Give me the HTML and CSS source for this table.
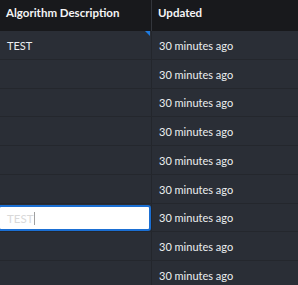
FILE: index.html
```html
<!DOCTYPE html>
<html>
<head>
<meta charset="utf-8">
<link rel="stylesheet" href="styles.css">
</head>
<body>
<div class="grid">
  <div class="header">
    <div class="hcell c1">Algorithm Description</div>
    <div class="hcell c2">Updated</div>
  </div>
  <div class="body">
    <div class="row"><div class="cell c1 marked">TEST</div><div class="cell c2">30 minutes ago</div></div>
    <div class="row"><div class="cell c1"></div><div class="cell c2">30 minutes ago</div></div>
    <div class="row"><div class="cell c1"></div><div class="cell c2">30 minutes ago</div></div>
    <div class="row"><div class="cell c1"></div><div class="cell c2">30 minutes ago</div></div>
    <div class="row"><div class="cell c1"></div><div class="cell c2">30 minutes ago</div></div>
    <div class="row"><div class="cell c1"></div><div class="cell c2">30 minutes ago</div></div>
    <div class="row"><div class="cell c1 editing"><div class="editor"><span class="etext">TEST</span><span class="caret"></span></div></div><div class="cell c2">30 minutes ago</div></div>
    <div class="row"><div class="cell c1"></div><div class="cell c2">30 minutes ago</div></div>
    <div class="row"><div class="cell c1"></div><div class="cell c2">30 minutes ago</div></div>
  </div>
</div>
</body>
</html>
```
FILE: styles.css
```css
* { box-sizing: border-box; }
html, body { margin: 0; padding: 0; background: #2a2e36; overflow: hidden; }
.grid { width: 298px; font-family: Lato, "Noto Sans", sans-serif; font-size: 11px; color: #eceef0; }
.header { display: flex; height: 31px; background: #18191c; }
.hcell { display: flex; align-items: center; padding-left: 6px; padding-bottom: 7px; font-size: 11.5px; font-weight: 700; color: #f4f4f5; }
.header .c1 { width: 152px; border-right: 1px solid #33363c; }
.header .c2 { flex: 1; }
.row { display: flex; height: 28.75px; border-bottom: 1px solid #24272d; background: #2a2e36; }
.cell { display: flex; align-items: center; padding-left: 7px; padding-top: 1px; position: relative; }
.row .c1 { width: 152px; border-right: 1px solid #23262c; }
.row .c2 { flex: 1; padding-left: 7px; }
.marked::after { content: ""; position: absolute; right: 1px; top: 0; width: 0; height: 0; border-top: 5px solid #1e7be0; border-left: 5px solid transparent; }
.cell.editing { padding: 0; }
.editor { position: absolute; left: -2px; top: 1px; width: 153px; height: 26px; background: #ffffff; border: 2px solid #1b6fd3; border-radius: 3px; display: flex; align-items: center; padding-left: 7px; padding-top: 1px; font-size: 11.5px; }
.etext { color: #d9d9d9; }
.caret { width: 1px; height: 13px; background: #a0a0a0; margin-left: 1px; }
```
